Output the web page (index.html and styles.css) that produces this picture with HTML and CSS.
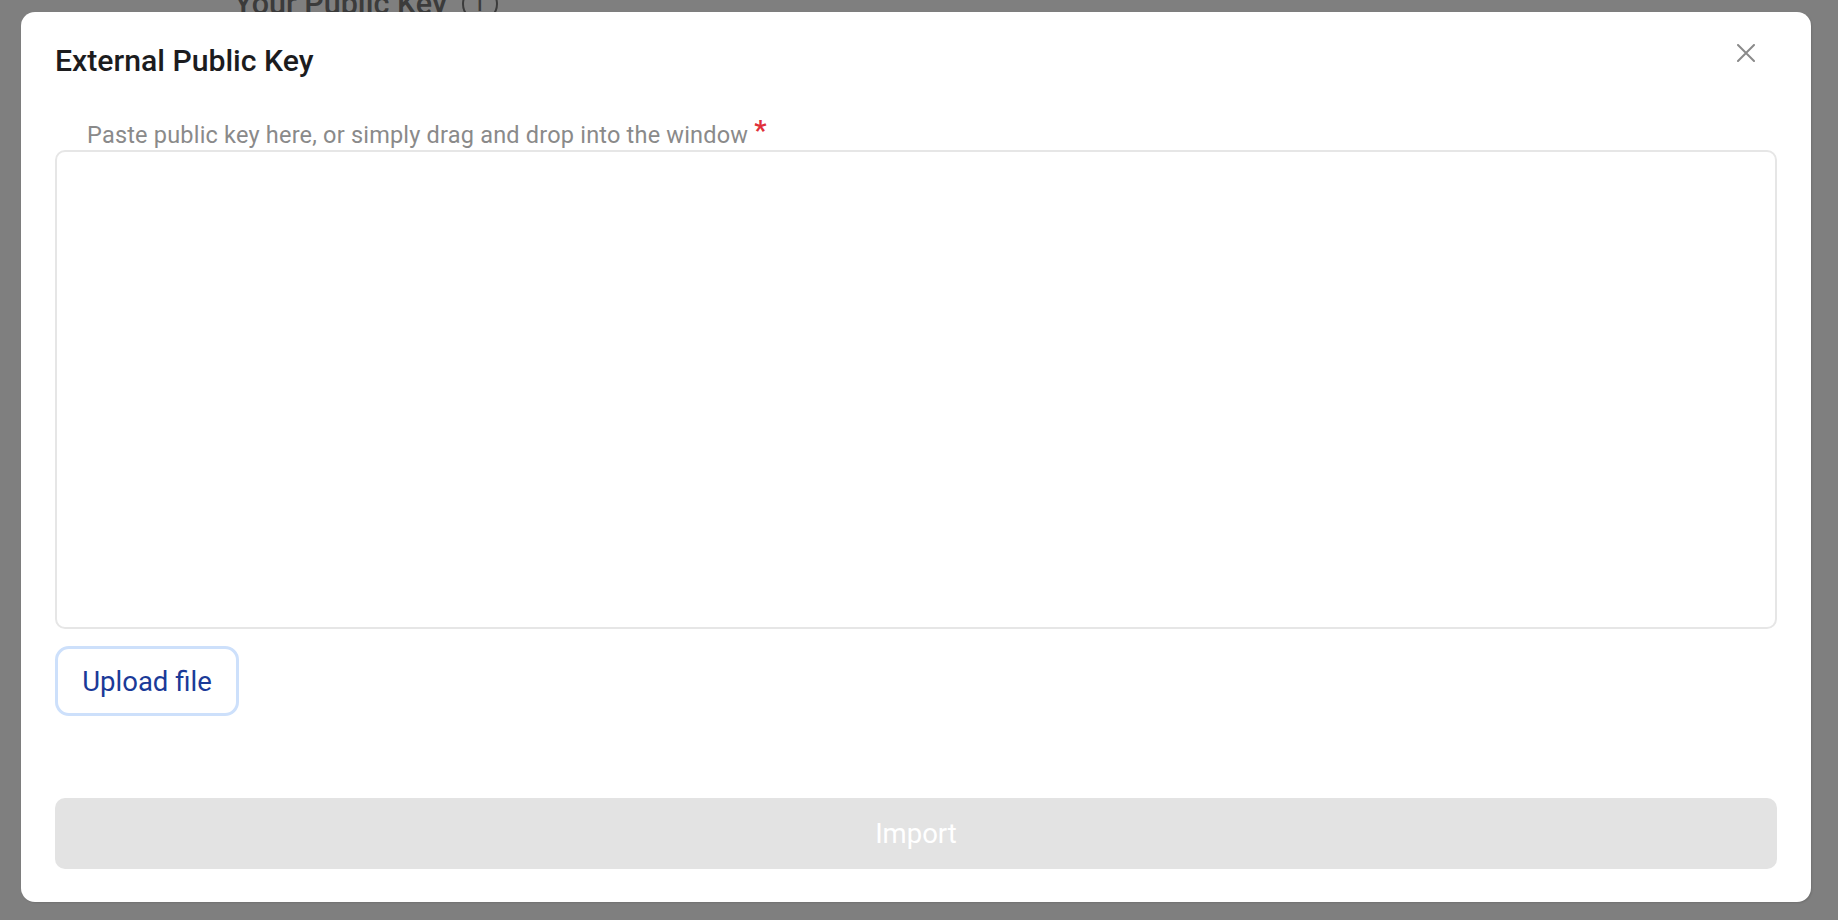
FILE: index.html
```html
<!DOCTYPE html>
<html lang="en">
<head>
<meta charset="utf-8">
<title>External Public Key</title>
<link rel="stylesheet" href="styles.css">
</head>
<body>
<div class="page">
  <div class="behind">
    <h2 class="behind-title">Your Public Key <span class="info-icon">i</span></h2>
  </div>
  <div class="overlay"></div>
  <div class="modal" role="dialog" aria-labelledby="modal-title">
    <button class="close" aria-label="Close">
      <svg width="18" height="18" viewBox="0 0 18 18"><path d="M1 1 L17 17 M17 1 L1 17" stroke="#8a8a8a" stroke-width="2" stroke-linecap="round" fill="none"/></svg>
    </button>
    <h1 class="modal-title" id="modal-title">External Public Key</h1>
    <div class="field">
      <label class="field-label" for="key">Paste public key here, or simply drag and drop into the window <span class="req">*</span></label>
      <textarea class="key-input" id="key"></textarea>
    </div>
    <div class="upload-row">
      <button class="btn-upload">Upload file</button>
    </div>
    <button class="btn-import" disabled>Import</button>
  </div>
</div>
</body>
</html>
```

FILE: styles.css
```css
* { box-sizing: border-box; }
html, body {
  margin: 0;
  padding: 0;
  width: 100%;
  height: 100%;
  overflow: hidden;
  font-family: Roboto, "Liberation Sans", Arial, sans-serif;
}
.page {
  position: relative;
  display: flow-root;
  width: 1838px;
  height: 920px;
  background: #ffffff;
  overflow: hidden;
}
.behind {
  padding: 0 0 0 234px;
  height: 40px;
}
.behind-title {
  margin: 0;
  position: relative;
  top: -14px;
  font-size: 30.5px;
  line-height: 36px;
  font-weight: 500;
  color: #777777;
  display: flex;
  align-items: center;
  gap: 15px;
}
.info-icon {
  display: inline-flex;
  align-items: center;
  justify-content: center;
  width: 36px;
  height: 36px;
  border: 2px solid #777777;
  border-radius: 50%;
  font-size: 20px;
}
.overlay {
  position: absolute;
  inset: 0;
  background: rgba(0, 0, 0, 0.5);
}
.modal {
  position: absolute;
  left: 21px;
  top: 12px;
  width: 1790px;
  height: 890px;
  background: #ffffff;
  border-radius: 14px;
  box-shadow: 1px 1px 2px rgba(0, 0, 0, 0.12);
  padding: 31px 34px 33px 34px;
  display: flex;
  flex-direction: column;
}
.close {
  position: absolute;
  top: 32px;
  right: 56px;
  width: 18px;
  height: 18px;
  padding: 0;
  border: 0;
  background: transparent;
  display: flex;
}
.modal-title {
  margin: 0;
  font-size: 30.2px;
  line-height: 36px;
  font-weight: 500;
  color: #1c1c1e;
}
.field {
  margin-top: 42px;
  display: flex;
  flex-direction: column;
  gap: 2px;
}
.field-label {
  padding-left: 32px;
  font-size: 23.5px;
  line-height: 26px;
  color: #8a8a8a;
  letter-spacing: 0.2px;
}
.req {
  color: #e0303a;
  font-weight: 700;
  font-size: 27px;
  position: relative;
  top: -3px;
}
.key-input {
  display: block;
  width: 100%;
  height: 479px;
  border: 2px solid #e6e6e6;
  border-radius: 10px;
  resize: none;
  outline: none;
  font-family: inherit;
}
.upload-row {
  margin-top: 17px;
  display: flex;
}
.btn-upload {
  width: 184px;
  height: 70px;
  border: 3px solid #cde0fb;
  border-radius: 14px;
  background: #ffffff;
  color: #1a3a98;
  font-family: inherit;
  font-size: 27.5px;
  padding: 0;
}
.btn-import {
  margin-top: 82px;
  width: 100%;
  height: 72px;
  border: 0;
  border-radius: 10px;
  background: #e3e3e3;
  color: #ffffff;
  font-family: inherit;
  font-size: 27.5px;
}
```
